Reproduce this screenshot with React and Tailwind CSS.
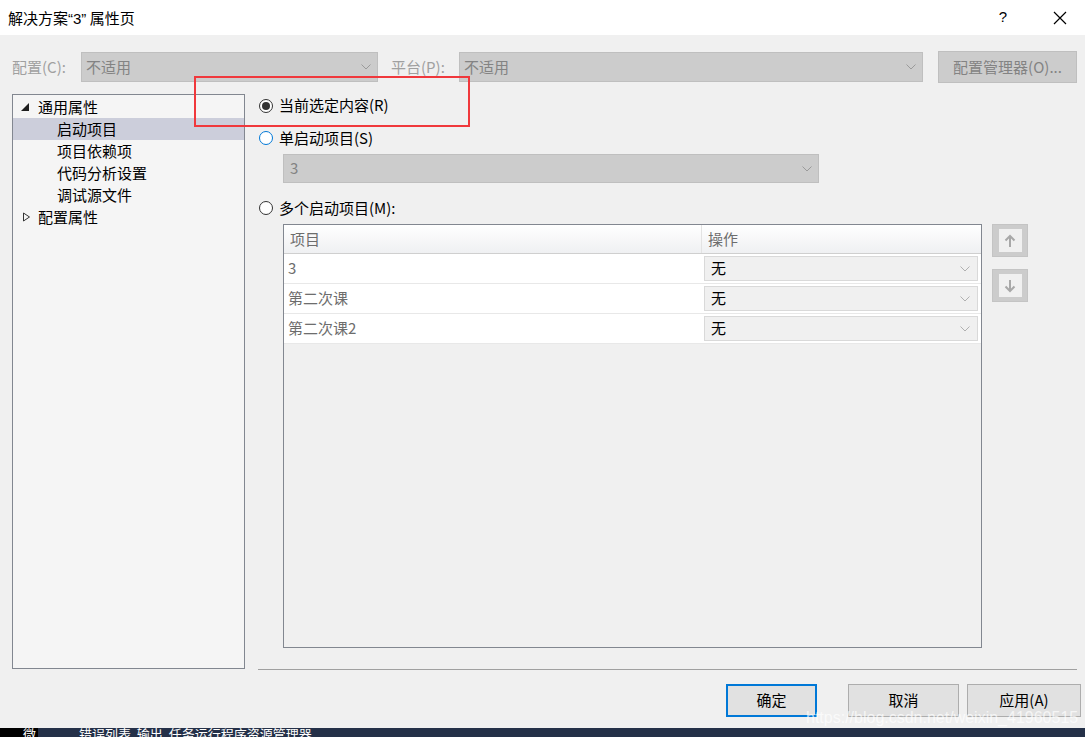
import React from "react";

const font = { fontFamily: '"Noto Sans CJK SC", "Noto Sans", sans-serif' };
const latin = { fontFamily: '"Liberation Sans", sans-serif' };

function Chevron({ className = "" }) {
  return (
    <svg width="10" height="6" viewBox="0 0 10 6" className={className}>
      <path d="M0.5 0.5 L5 5 L9.5 0.5" fill="none" stroke="currentColor" strokeWidth="1" />
    </svg>
  );
}

function Radio({ checked, focus }) {
  return (
    <span
      className={`flex h-[14px] w-[14px] shrink-0 items-center justify-center rounded-full border bg-white ${
        focus ? "border-[#0078d7]" : "border-[#333333]"
      }`}
    >
      {checked && <span className="h-[8px] w-[8px] rounded-full bg-[#333333]" />}
    </span>
  );
}

function DisabledSelect({ value, className }) {
  return (
    <div className={`flex shrink-0 items-center justify-between border border-[#bfbfbf] bg-[#cccccc] pl-[4px] pr-[6px] text-[#838383] ${className}`}>
      <span>{value}</span>
      <Chevron className="text-[#9a9a9a]" />
    </div>
  );
}

export default function App() {
  const treeChildren = ["启动项目", "项目依赖项", "代码分析设置", "调试源文件"];
  const rows = ["3", "第二次课", "第二次课2"];

  return (
    <div className="relative flex h-[737px] w-[1085px] flex-col overflow-hidden bg-[#f0f0f0] text-[15px] text-black" style={font}>
      {/* Title bar */}
      <div className="flex h-[35px] shrink-0 items-center justify-between bg-white pl-[8px]">
        <span className="leading-none">
          解决方案<span style={latin}>“3”</span> 属性页
        </span>
        <div className="flex items-center">
          <span className="w-[46px] text-center text-[15px]" style={latin}>?</span>
          <svg width="14" height="14" viewBox="0 0 14 14" className="mr-[18px] ml-[27px]">
            <path d="M1 1 L13 13 M13 1 L1 13" stroke="#000" strokeWidth="1.2" />
          </svg>
        </div>
      </div>

      {/* Body */}
      <div className="flex flex-1 flex-col">
        {/* Config row */}
        <div className="mt-[16px] flex h-[32px] items-center pl-[12px]">
          <span className="w-[69px] shrink-0 text-[#a0a0a0]">配置(C):</span>
          <DisabledSelect value="不适用" className="h-[30px] w-[297px]" />
          <span className="ml-[13px] w-[68px] shrink-0 text-[#a0a0a0]">平台(P):</span>
          <DisabledSelect value="不适用" className="h-[30px] w-[464px]" />
          <div className="ml-[15px] flex h-[32px] w-[139px] shrink-0 items-center justify-center border border-[#bfbfbf] bg-[#cccccc] text-[#838383]">
            配置管理器(O)...
          </div>
        </div>

        {/* Main area */}
        <div className="mt-[11px] flex h-[575px]">
          {/* Tree */}
          <div className="ml-[12px] w-[233px] shrink-0 border border-[#828790] bg-[#f5f5f5] pt-[1px]">
            <div className="flex h-[22px] items-center">
              <svg width="10" height="10" viewBox="0 0 10 10" className="ml-[7px] mr-[8px]">
                <path d="M9 1 L9 9 L1 9 Z" fill="#1e1e1e" />
              </svg>
              <span>通用属性</span>
            </div>
            {treeChildren.map((t, i) => (
              <div key={t} className={`flex h-[22px] items-center pl-[44px] ${i === 0 ? "bg-[#cccedb]" : ""}`}>
                {t}
              </div>
            ))}
            <div className="flex h-[22px] items-center">
              <svg width="10" height="10" viewBox="0 0 10 10" className="ml-[9px] mr-[6px]">
                <path d="M1.5 1 L7.5 5 L1.5 9 Z" fill="none" stroke="#333" strokeWidth="1" />
              </svg>
              <span>配置属性</span>
            </div>
          </div>

          {/* Right content */}
          <div className="ml-[14px] flex min-w-0 flex-1 flex-col">
            <div className="flex h-[22px] items-center gap-[6px] pt-[1px]">
              <Radio checked />
              <span>当前选定内容(R)</span>
            </div>
            <div className="mt-[11px] flex h-[22px] items-center gap-[6px]">
              <Radio focus />
              <span>单启动项目(S)</span>
            </div>
            <DisabledSelect value="3" className="mt-[5px] ml-[24px] h-[29px] w-[536px] pl-[6px]" />
            <div className="mt-[14px] flex h-[22px] items-center gap-[6px]">
              <Radio />
              <span>多个启动项目(M):</span>
            </div>

            <div className="mt-[5px] flex gap-[10px]">
              {/* Table */}
              <div className="ml-[24px] flex h-[424px] w-[699px] shrink-0 flex-col border border-[#828790] bg-[#f0f0f0]">
                <div className="flex h-[29px] border-b border-[#cfcfcf] bg-gradient-to-b from-white to-[#eff0f2] text-[#6d6d6d]">
                  <div className="flex w-[418px] items-center border-r border-[#e3e3e3] pl-[6px]">项目</div>
                  <div className="flex flex-1 items-center pl-[6px]">操作</div>
                </div>
                {rows.map((r) => (
                  <div key={r} className="flex h-[30px] border-b border-[#e8e8e8] bg-white">
                    <div className="flex w-[418px] items-center pl-[4px] text-[#6d6d6d]">{r}</div>
                    <div className="flex flex-1 items-center py-[2px] pl-[2px] pr-[3px]">
                      <div className="flex h-full w-full items-center justify-between border border-[#d9d9d9] bg-[#f0f0f0] pl-[6px] pr-[7px]">
                        <span>无</span>
                        <Chevron className="text-[#b0b0b0]" />
                      </div>
                    </div>
                  </div>
                ))}
              </div>

              {/* Up / down */}
              <div className="flex flex-col gap-[12px]">
                <div className="flex h-[33px] w-[36px] items-center justify-center border border-[#c4c4c4] bg-[#cccccc]">
                  <div className="flex h-[23px] w-[23px] items-center justify-center bg-[#f0f0f0]">
                    <svg width="12" height="14" viewBox="0 0 12 14">
                      <path d="M6 13 L6 2 M1.5 6.5 L6 2 L10.5 6.5" fill="none" stroke="#a8a8a8" strokeWidth="2" />
                    </svg>
                  </div>
                </div>
                <div className="flex h-[33px] w-[36px] items-center justify-center border border-[#c4c4c4] bg-[#cccccc]">
                  <div className="flex h-[23px] w-[23px] items-center justify-center bg-[#f0f0f0]">
                    <svg width="12" height="14" viewBox="0 0 12 14">
                      <path d="M6 1 L6 12 M1.5 7.5 L6 12 L10.5 7.5" fill="none" stroke="#a8a8a8" strokeWidth="2" />
                    </svg>
                  </div>
                </div>
              </div>
            </div>
          </div>
        </div>

        {/* Separator */}
        <div className="ml-[258px] mr-[8px] h-[1px] bg-[#a0a0a0]" />

        {/* Buttons */}
        <div className="mt-[14px] flex justify-end pr-[4px]">
          <div className="flex h-[33px] w-[91px] items-center justify-center border-2 border-[#0078d7] bg-[#e1e1e1]">确定</div>
          <div className="ml-[31px] flex h-[33px] w-[111px] items-center justify-center border border-[#adadad] bg-[#e1e1e1]">取消</div>
          <div className="ml-[8px] flex h-[33px] w-[114px] items-center justify-center border border-[#adadad] bg-[#e1e1e1]">应用(A)</div>
        </div>
      </div>

      {/* Taskbar strip */}
      <div className="relative flex h-[9px] shrink-0 overflow-hidden bg-[#243048]">
        <div className="flex w-[38px] justify-end bg-black pr-[2px] text-[13px] leading-[16px] text-white">
          <span className="mt-[-2px]">微</span>
        </div>
        <span className="ml-[41px] mt-[-2px] whitespace-nowrap text-[13px] leading-[16px] text-white">
          错误列表 &nbsp;输出 &nbsp;任务运行程序资源管理器
        </span>
      </div>

      {/* Annotation overlay */}
      <div className="pointer-events-none absolute left-[194px] top-[76px] h-[51px] w-[276px] border-2 border-[#f0383c]" />

      {/* Watermark */}
      <span
        className="pointer-events-none absolute left-[806px] top-[706px] whitespace-nowrap text-[16px] text-white/70"
        style={latin}
      >
        https://blog.csdn.net/weixin_41960515
      </span>
    </div>
  );
}
